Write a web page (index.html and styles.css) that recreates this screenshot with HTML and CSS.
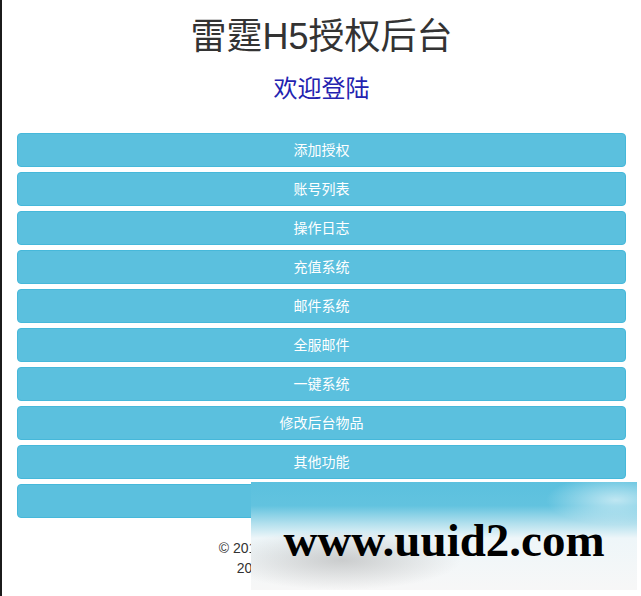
FILE: index.html
```html
<!DOCTYPE html>
<html lang="zh-CN">
<head>
<meta charset="utf-8">
<title>雷霆H5授权后台</title>
<link rel="stylesheet" href="styles.css">
</head>
<body>
<div class="page">
  <div class="container">
    <h1 class="title">雷霆H5授权后台</h1>
    <h3 class="welcome">欢迎登陆</h3>
    <nav class="menu">
      <a class="btn" href="#">添加授权</a>
      <a class="btn" href="#">账号列表</a>
      <a class="btn" href="#">操作日志</a>
      <a class="btn" href="#">充值系统</a>
      <a class="btn" href="#">邮件系统</a>
      <a class="btn" href="#">全服邮件</a>
      <a class="btn" href="#">一键系统</a>
      <a class="btn" href="#">修改后台物品</a>
      <a class="btn" href="#">其他功能</a>
      <a class="btn" href="#">退出登陆</a>
    </nav>
    <footer class="footer">
      <p>© 2017-2020 雷霆H5授权后台 v2</p>
      <p>2020 Powered by 雷霆H5 v</p>
    </footer>
  </div>
  <div class="watermark"><span class="wm-text">www.uuid2.com</span></div>
</div>
</body>
</html>
```
FILE: styles.css
```css
* { box-sizing: border-box; }
html, body { margin: 0; padding: 0; background: #fff; }
body {
  font-family: "Liberation Sans", "Noto Sans CJK SC", Arial, sans-serif;
  font-size: 14px;
  line-height: 20px;
  color: #333;
}
.page {
  position: relative;
  display: flow-root;
  min-height: 596px;
  border-left: 2px solid #1b1b1b;
}
.container {
  padding: 0 15px;
}
.title {
  margin: 17px 0 0;
  font-size: 36px;
  line-height: 40px;
  font-weight: 400;
  text-align: center;
  color: #333;
}
.welcome {
  margin: 17px 0 0;
  font-size: 24px;
  line-height: 30px;
  font-weight: 400;
  text-align: center;
  color: #2323b0;
}
.menu {
  margin-top: 29px;
  display: flex;
  flex-direction: column;
  gap: 5px;
}
.btn {
  display: block;
  height: 34px;
  padding: 6px 12px;
  line-height: 20px;
  font-size: 14px;
  text-align: center;
  color: #fff;
  text-decoration: none;
  background: #5bc0de;
  border: 1px solid #46b8da;
  border-radius: 4px;
}
.footer {
  margin-top: 20px;
  text-align: center;
}
.footer p { margin: 0; }
.watermark {
  position: absolute;
  left: 249px;
  top: 482px;
  width: 386px;
  height: 108px;
  background:
    radial-gradient(ellipse 120px 30px at 90px 78px, rgba(170,170,170,0.55), rgba(200,200,200,0) 100%),
    radial-gradient(ellipse 70px 25px at 365px 18px, rgba(255,255,255,0.6), rgba(255,255,255,0) 100%),
    linear-gradient(to bottom, #5bc0de 0%, #62c3df 22%, #b0dfed 38%, #eef6f9 52%, #f7f7f7 100%);
  display: flex;
  align-items: flex-start;
  justify-content: center;
}
.wm-text {
  font-family: "Liberation Serif", "Times New Roman", serif;
  font-weight: 700;
  font-size: 47px;
  line-height: 50px;
  color: #000;
  margin-left: 0;
  margin-top: 33px;
}
```
